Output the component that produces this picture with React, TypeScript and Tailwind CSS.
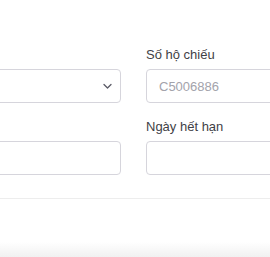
import React from 'react';

function Field({ label, children }: { label?: string; children: React.ReactNode }) {
    return (
        <div className="flex flex-col">
            <label className="mb-[5px] h-[18px] whitespace-nowrap text-[13px] leading-[18px] text-[#3f3f46]">{label}</label>
            {children}
        </div>
    );
}

export default function App() {
    const boxClass = 'h-[34px] w-full rounded border border-[#d6d5dc] bg-white px-3 text-[13px] text-[#3f3f46] outline-none placeholder:text-[#a3a3ab]';

    return (
        <div className="flex h-[257px] w-[270px] flex-col overflow-hidden bg-white pt-[46px] font-['Liberation_Sans',Arial,sans-serif]">
            {/* left column starts off-screen */}
            <div className="ml-[-79px] grid w-[425px] grid-cols-2 gap-x-[25px] gap-y-[15px]">
                <Field>
                    <div className={`${boxClass} flex items-center justify-end pr-2`}>
                        <svg className="h-[8px] w-[9px] text-[#5b5b66]" viewBox="0 0 9 8" fill="none" stroke="currentColor" strokeWidth={1.3} strokeLinecap="round" strokeLinejoin="round">
                            <path d="M1 2.5 4.5 6 8 2.5" />
                        </svg>
                    </div>
                </Field>
                <Field label="Số hộ chiếu">
                    <input type="text" placeholder="C5006886" className={boxClass} />
                </Field>
                <Field>
                    <input type="text" className={boxClass} />
                </Field>
                <Field label="Ngày hết hạn">
                    <input type="text" className={boxClass} />
                </Field>
            </div>

            <div className="mt-[23px] h-px bg-[#ededed]" />
            <div className="flex-1" />
            <div className="h-[15px] bg-linear-to-b from-white to-[#f1f1f1]" />
        </div>
    );
}
